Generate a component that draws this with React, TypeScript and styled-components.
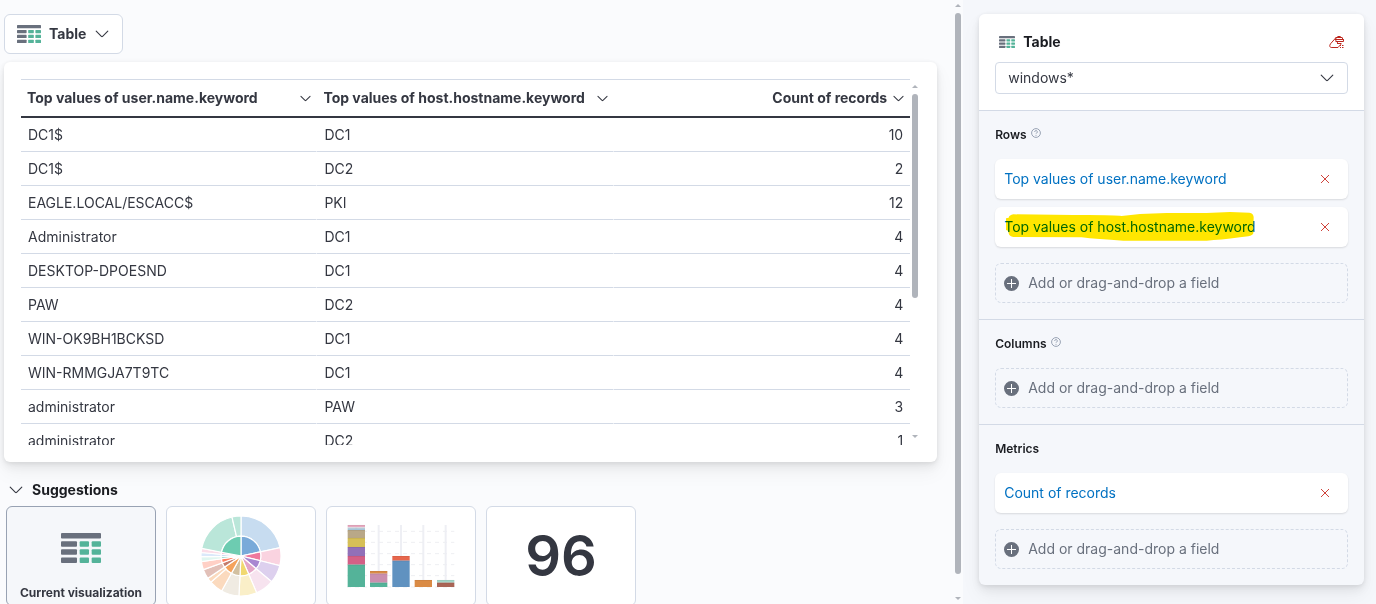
import React from 'react';
import styled, { createGlobalStyle } from 'styled-components';

const GlobalStyle = createGlobalStyle`
  *, *::before, *::after { box-sizing: border-box; }
  body {
    margin: 0;
    background: #f5f7fb;
    color: #343741;
    font-family: Inter, "Liberation Sans", sans-serif;
    font-size: 14px;
    line-height: 20px;
  }
  button, select {
    font: inherit;
    color: inherit;
    border: 0;
    background: none;
    padding: 0;
    margin: 0;
    cursor: pointer;
  }
  h2, h3 { margin: 0; font-size: inherit; }
  svg { display: block; flex: none; }
`;

const raised = `
  box-shadow: 0 1px 4px rgba(0, 0, 0, 0.08), 0 5px 10px rgba(0, 0, 0, 0.06),
    0 10px 20px rgba(0, 0, 0, 0.05);
`;

const Page = styled.div`
  display: grid;
  grid-template-columns: minmax(0, 7fr) minmax(0, 3fr);
  height: 100vh;
  overflow: hidden;
`;

const Main = styled.main`
  display: flex;
  gap: 18px;
  min-height: 0;
  padding: 0 2px 0 4px;
  background: #fafbfd;
`;

const Content = styled.div`
  flex: 1;
  min-width: 0;
  padding-top: 14px;
`;

const ChartSwitch = styled.button`
  display: flex;
  align-items: center;
  gap: 8px;
  height: 40px;
  padding: 0 12px;
  border: 1px solid #d3dae6;
  border-radius: 6px;
  background: #fff;
  font-weight: 700;
`;

const Workspace = styled.section`
  display: flex;
  gap: 2px;
  margin-top: 8px;
  padding: 17px 19px 17px 17px;
  border-radius: 6px;
  background: #fff;
  ${raised}
`;

const Grid = styled.div`
  flex: 1;
  min-width: 0;
  height: 366px;
  overflow: hidden;
`;

const DataTable = styled.table`
  width: 100%;
  table-layout: fixed;
  border-collapse: separate;
  border-spacing: 0;
`;

const HeadCell = styled.th`
  height: 39px;
  padding: 0 6px;
  border-top: 1px solid #d3dae6;
  border-bottom: 2px solid #343741;
  text-align: left;
`;

const HeadButton = styled.button<{ $fit?: boolean; $end?: boolean }>`
  display: flex;
  align-items: center;
  justify-content: ${(p) => (p.$end ? 'flex-end' : p.$fit ? 'flex-start' : 'space-between')};
  gap: ${(p) => (p.$end ? 6 : 12)}px;
  width: 100%;
  font-weight: 700;
  white-space: nowrap;
`;

const Cell = styled.td<{ $end?: boolean }>`
  height: 34px;
  padding: 0 7px;
  border-bottom: 1px solid #d3dae6;
  text-align: ${(p) => (p.$end ? 'right' : 'left')};
  white-space: nowrap;
  &:not(:last-child) { border-right: 1px solid #fff; }
`;

const Bar = styled.div<{ $top: number; $bottom: number }>`
  display: flex;
  flex-direction: column;
  gap: 6px;
  flex: none;
  width: 6px;
  padding: ${(p) => p.$top}px 0 ${(p) => p.$bottom}px;
`;

const Track = styled.div`
  flex: 1;
`;

const Thumb = styled.div<{ $size: number }>`
  height: ${(p) => p.$size}%;
  border-radius: 3px;
  background: #b0b4bb;
`;

const SuggestionsToggle = styled.button`
  display: flex;
  align-items: center;
  gap: 8px;
  height: 24px;
  margin: 16px 0 4px 4px;
  color: #1a1c21;
  font-weight: 700;
`;

const SuggestionList = styled.div`
  display: flex;
  gap: 10px;
  padding-left: 2px;
`;

const Suggestion = styled.button<{ $active?: boolean }>`
  display: flex;
  flex-direction: column;
  align-items: center;
  justify-content: center;
  flex: none;
  width: 150px;
  height: 100px;
  padding-top: ${(p) => (p.$active ? 22 : 0)}px;
  overflow: hidden;
  border: 1px solid ${(p) => (p.$active ? '#98a2b3' : '#d3dae6')};
  border-radius: 6px;
  background: ${(p) => (p.$active ? '#f5f7fa' : '#fff')};
`;

const Caption = styled.span`
  margin-top: 22px;
  font-size: 12px;
  line-height: 16px;
  font-weight: 700;
`;

const BigNumber = styled.span`
  font-size: 56px;
  line-height: 64px;
  font-weight: 600;
`;

const Aside = styled.aside`
  padding: 14px 12px 0 16px;
  background: #f5f7fb;
`;

const Panel = styled.div`
  border-radius: 6px;
  background: #f5f7fb;
  ${raised}
`;

const PanelHead = styled.div`
  display: flex;
  flex-direction: column;
  gap: 8px;
  padding: 16px;
  border-radius: 6px 6px 0 0;
  background: #fff;
`;

const TitleRow = styled.div`
  display: flex;
  align-items: center;
  gap: 8px;
  height: 24px;
  padding: 0 3px 0 4px;
  color: #1a1c21;
`;

const ClearButton = styled.button`
  margin-left: auto;
`;

const SelectWrap = styled.label`
  display: grid;
  align-items: center;
  > * { grid-area: 1 / 1; }
  > svg { justify-self: end; margin-right: 13px; pointer-events: none; }
`;

const SourceSelect = styled.select`
  width: 100%;
  height: 32px;
  padding: 0 12px;
  border: 1px solid #d3dae6;
  border-radius: 4px;
  background: #fff;
  appearance: none;
`;

const Group = styled.section`
  display: flex;
  flex-direction: column;
  gap: 16px;
  padding: 16px;
  border-top: 1px solid #d3dae6;
`;

const GroupTitle = styled.h3`
  display: flex;
  gap: 4px;
  color: #1a1c21;
  font-size: 12px;
  line-height: 16px;
  font-weight: 600;
  > svg { margin-top: 1px; }
`;

const Dimensions = styled.div`
  display: flex;
  flex-direction: column;
  gap: 8px;
`;

const Dimension = styled.div`
  position: relative;
  display: flex;
  align-items: center;
  justify-content: space-between;
  height: 40px;
  padding: 0 18px 0 9px;
  border-radius: 6px;
  background: #fff;
  box-shadow: 0 1px 2px rgba(0, 0, 0, 0.12);
`;

const DimensionLink = styled.a`
  color: #0071c2;
  text-decoration: none;
`;

const Marker = styled.svg`
  position: absolute;
  left: 0;
  top: 0;
  mix-blend-mode: multiply;
  pointer-events: none;
`;

const AddField = styled.button`
  display: flex;
  align-items: center;
  gap: 9px;
  width: 100%;
  height: 40px;
  padding: 0 8px;
  border: 1px dashed #d3dae6;
  border-radius: 6px;
  color: #69707d;
`;

const TableIcon = ({ width, height }: { width: number; height: number }) => (
  <svg width={width} height={height} viewBox="0 0 30 22" preserveAspectRatio="none" aria-hidden="true">
    <rect width="30" height="4" rx="0.7" fill="#69707d" />
    {[6, 12, 18].map((y) => (
      <g key={y}>
        <rect y={y} width="12" height="4" rx="0.7" fill="#69707d" />
        <rect x="14" y={y} width="7" height="4" rx="0.7" fill="#54b399" />
        <rect x="23" y={y} width="7" height="4" rx="0.7" fill="#54b399" />
      </g>
    ))}
  </svg>
);

const Chevron = ({ small }: { small?: boolean }) => (
  <svg
    width={small ? 11 : 16}
    height={small ? 11 : 16}
    viewBox={small ? '1 1 14 14' : '0 0 16 16'}
    fill="none"
    stroke="#343741"
    strokeWidth={small ? 1.3 : 1.1}
    aria-hidden="true"
  >
    <path d="M2.200 5.200 7.400 10.400a.9.9 0 0 0 1.200 0L13.800 5.200" strokeLinecap="round" />
  </svg>
);

const Eraser = () => (
  <svg width="16" height="16" viewBox="0 0 16 16" fill="none" stroke="#bd271e" aria-hidden="true">
    <path d="M7 3.600 1.500 9.800Q.300 11.400 1 12.800q.4.700 1.200.7H9l3-3.300" />
    <path d="M8.700 2.500h2.600M6.500 3.500h7M6 5.500h8.700M6.500 7.500h8M8 9.500h4.500M8.700 2.500 6.500 5M11.500 2.500l3 3v2M6.500 6l3 4" />
    <path d="M11 11.500h1M13 11.500h1.500M11 13.500h1M13 13.500h1.500" />
  </svg>
);

const Help = () => (
  <svg width="10" height="10" viewBox="0 0 10 10" fill="none" stroke="#98a2b3" aria-hidden="true">
    <circle cx="5" cy="5" r="4.400" />
    <path d="M3.700 3.900a1.300 1.300 0 1 1 1.900 1.100q-.6.300-.6.900M5 6.900v.9" />
  </svg>
);

const Plus = () => (
  <svg width="15" height="15" viewBox="0 0 15 15" aria-hidden="true">
    <circle cx="7.5" cy="7.5" r="7.5" fill="#69707d" />
    <path d="M3 7.500h9M7.500 3v9" stroke="#fff" />
  </svg>
);

const Cross = () => (
  <svg width="10" height="10" viewBox="0 0 10 10" stroke="#d0433b" aria-hidden="true">
    <path d="M1 1l8 8M9 1l-8 8" />
  </svg>
);

const Triangle = ({ down }: { down?: boolean }) => (
  <svg width="6" height="3" viewBox="0 0 6 3" fill="#b0b4bb" aria-hidden="true">
    <path d={down ? 'M0 0h6L3 3Z' : 'M0 3h6L3 0Z'} />
  </svg>
);

const ScrollBar = ({ top, bottom, size }: { top: number; bottom: number; size: number }) => (
  <Bar $top={top} $bottom={bottom} aria-hidden="true">
    <Triangle />
    <Track>
      <Thumb $size={size} />
    </Track>
    <Triangle down />
  </Bar>
);

type Slice = [number, number, string];

const innerSlices: Slice[] = [
  [0, 78, '#79aad9'], [78, 104, '#ee789d'], [104, 130, '#a987d1'], [130, 157, '#e4a6c7'],
  [157, 183, '#f1d86f'], [183, 209, '#d2c0a0'], [209, 236, '#f5a35c'], [236, 250, '#c47c6c'],
  [250, 262, '#ff7e62'], [262, 269, '#a8dcd0'], [269, 275, '#b5d2ee'], [275, 281, '#f5bcd0'],
  [281, 360, '#6dccb1'],
];

const outerSlices: Slice[] = [
  [0, 78, '#c7dcf0'], [78, 104, '#fad3e0'], [104, 130, '#ddd0ee'], [130, 157, '#f7e3ef'],
  [157, 183, '#faefc8'], [183, 209, '#f0ebe2'], [209, 229, '#fbdabe'], [229, 236, '#fbdabe'],
  [236, 250, '#e2c0b8'], [250, 262, '#ffd0c6'], [262, 269, '#e0f6f0'], [269, 275, '#dbe9fa'],
  [275, 281, '#fbdde8'], [281, 347, '#bae6d9'], [347, 360, '#bae6d9'],
];

const ringPath = (from: number, to: number, inner: number, outer: number) => {
  const at = (deg: number, r: number) => {
    const a = (deg * Math.PI) / 180;
    return `${(40 + r * Math.sin(a)).toFixed(2)} ${(40 - r * Math.cos(a)).toFixed(2)}`;
  };
  return `M${at(from, outer)}A${outer} ${outer} 0 0 1 ${at(to, outer)}L${at(to, inner)}A${inner} ${inner} 0 0 0 ${at(from, inner)}Z`;
};

const Sunburst = () => (
  <svg width="80" height="80" viewBox="0 0 80 80" stroke="#fff" strokeWidth="1.2" aria-hidden="true">
    {outerSlices.map(([a, b, c]) => (
      <path key={a} d={ringPath(a, b, 19.8, 40)} fill={c} />
    ))}
    {innerSlices.map(([a, b, c]) => (
      <path key={a} d={ringPath(a, b, 0.5, 19.8)} fill={c} />
    ))}
  </svg>
);

type Segment = [number, number, string];

const stacks: { x: number; parts: Segment[] }[] = [
  {
    x: 68,
    parts: [
      [60, 67, '#e8aac0'], [67, 70, '#dfe6ee'], [70, 75, '#a9c8dc'], [75, 99, '#b9a888'],
      [99, 126, '#d6bf57'], [126, 153, '#9170b8'], [153, 179, '#d36086'], [179, 246, '#54b399'],
    ],
  },
  { x: 135, parts: [[198, 206, '#da8b45'], [206, 233, '#ca8eae'], [233, 246, '#54b399']] },
  { x: 202, parts: [[153, 167, '#e7664c'], [167, 246, '#6092c0']] },
  { x: 269, parts: [[225, 246, '#da8b45']] },
  { x: 336, parts: [[225, 233, '#a3d6c8'], [233, 246, '#aa6556']] },
];

const BarChart = () => (
  <svg width="148" height="98" viewBox="6 6 444 294" aria-hidden="true">
    <path d="M66 79h322M66 112h322M66 146h322M66 179h322M66 212h322M66 246h322" stroke="#eeeff2" strokeWidth="3" strokeDasharray="12 12" />
    <path d="M94 60v186M161 60v186M228 60v186M295 60v186M362 60v186" stroke="#eeeff4" strokeWidth="6" />
    {stacks.map(({ x, parts }) =>
      parts.map(([top, bottom, fill]) => (
        <g key={`${x}-${top}`}>
          <rect x={x} y={top} width="52" height={bottom - top} fill={fill} />
          <path d={`M${x} ${top + 1}h52`} stroke="#000" strokeOpacity="0.1" strokeWidth="2" />
        </g>
      )),
    )}
  </svg>
);

const rows: [string, string, number][] = [
  ['DC1$', 'DC1', 10],
  ['DC1$', 'DC2', 2],
  ['EAGLE.LOCAL/ESCACC$', 'PKI', 12],
  ['Administrator', 'DC1', 4],
  ['DESKTOP-DPOESND', 'DC1', 4],
  ['PAW', 'DC2', 4],
  ['WIN-OK9BH1BCKSD', 'DC1', 4],
  ['WIN-RMMGJA7T9TC', 'DC1', 4],
  ['administrator', 'PAW', 3],
  ['administrator', 'DC2', 1],
];

const DimensionItem = ({ label, marked }: { label: string; marked?: boolean }) => (
  <Dimension>
    <DimensionLink href="#">{label}</DimensionLink>
    <button type="button" aria-label={`Remove ${label}`}>
      <Cross />
    </button>
    {marked && (
      <Marker width="353" height="40" viewBox="45 261 1059 120" aria-hidden="true">
        <path
          fill="#ffe600"
          d="M78 295 86 293Q88 285 100 283L280 285Q400 284 425 288L480 282 560 279H680L750 276 808 278Q821 280 821 292L820 340Q818 346 805 349L780 352Q720 360 680 362H430Q350 358 305 352L100 351Q88 350 86 340L84 332 78 330Z"
        />
      </Marker>
    )}
  </Dimension>
);

const FieldGroup = ({ title, help, items }: { title: string; help?: boolean; items: { label: string; marked?: boolean }[] }) => (
  <Group>
    <GroupTitle>
      {title}
      {help && <Help />}
    </GroupTitle>
    {items.length > 0 && (
      <Dimensions>
        {items.map((item) => (
          <DimensionItem key={item.label} {...item} />
        ))}
      </Dimensions>
    )}
    <AddField type="button">
      <Plus />
      Add or drag-and-drop a field
    </AddField>
  </Group>
);

export default function App() {
  return (
    <>
      <GlobalStyle />
      <Page>
        <Main>
          <Content>
            <ChartSwitch type="button">
              <TableIcon width={24} height={18} />
              Table
              <Chevron />
            </ChartSwitch>
            <Workspace>
              <Grid>
                <DataTable>
                  <thead>
                    <tr>
                      <HeadCell scope="col">
                        <HeadButton type="button">
                          Top values of user.name.keyword
                          <Chevron small />
                        </HeadButton>
                      </HeadCell>
                      <HeadCell scope="col">
                        <HeadButton type="button" $fit>
                          Top values of host.hostname.keyword
                          <Chevron small />
                        </HeadButton>
                      </HeadCell>
                      <HeadCell scope="col">
                        <HeadButton type="button" $end>
                          Count of records
                          <Chevron small />
                        </HeadButton>
                      </HeadCell>
                    </tr>
                  </thead>
                  <tbody>
                    {rows.map(([user, host, count], i) => (
                      <tr key={i}>
                        <Cell>{user}</Cell>
                        <Cell>{host}</Cell>
                        <Cell $end>{count}</Cell>
                      </tr>
                    ))}
                  </tbody>
                </DataTable>
              </Grid>
              <ScrollBar top={6} bottom={7} size={61} />
            </Workspace>
            <SuggestionsToggle type="button" aria-expanded="true">
              <Chevron />
              Suggestions
            </SuggestionsToggle>
            <SuggestionList>
              <Suggestion type="button" $active>
                <TableIcon width={40} height={30} />
                <Caption>Current visualization</Caption>
              </Suggestion>
              <Suggestion type="button" aria-label="Pie">
                <Sunburst />
              </Suggestion>
              <Suggestion type="button" aria-label="Bar">
                <BarChart />
              </Suggestion>
              <Suggestion type="button">
                <BigNumber>96</BigNumber>
              </Suggestion>
            </SuggestionList>
          </Content>
          <ScrollBar top={4} bottom={4} size={97} />
        </Main>
        <Aside>
          <Panel>
            <PanelHead>
              <TitleRow>
                <TableIcon width={16} height={12} />
                <h2>Table</h2>
                <ClearButton type="button" aria-label="Clear layer">
                  <Eraser />
                </ClearButton>
              </TitleRow>
              <SelectWrap>
                <SourceSelect aria-label="Data view" defaultValue="windows*">
                  <option>windows*</option>
                </SourceSelect>
                <Chevron />
              </SelectWrap>
            </PanelHead>
            <FieldGroup
              title="Rows"
              help
              items={[
                { label: 'Top values of user.name.keyword' },
                { label: 'Top values of host.hostname.keyword', marked: true },
              ]}
            />
            <FieldGroup title="Columns" help items={[]} />
            <FieldGroup title="Metrics" items={[{ label: 'Count of records' }]} />
          </Panel>
        </Aside>
      </Page>
    </>
  );
}
